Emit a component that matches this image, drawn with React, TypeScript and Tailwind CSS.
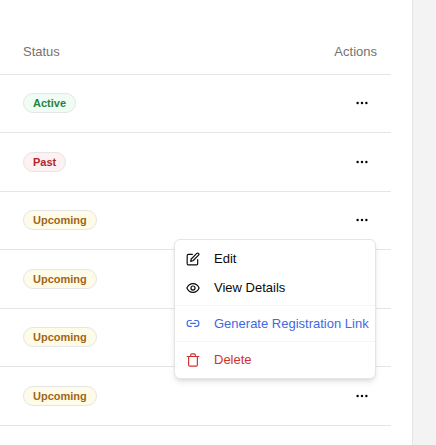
import type { ReactNode } from "react";

type Status = "Active" | "Past" | "Upcoming";

const rows: Status[] = ["Active", "Past", "Upcoming", "Upcoming", "Upcoming", "Upcoming"];
const openRow = 2;

const badgeColors: Record<Status, string> = {
  Active: "bg-green-50 text-[#28833f]",
  Past: "bg-[#fdf1f1] text-[#b4232a]",
  Upcoming: "bg-[#fefce8] text-[#a16519]",
};

function Icon({ children }: { children: ReactNode }) {
  return (
    <svg
      className="size-[14px] shrink-0"
      viewBox="0 0 24 24"
      fill="none"
      stroke="currentColor"
      strokeWidth="2"
      strokeLinecap="round"
      strokeLinejoin="round"
      aria-hidden="true"
    >
      {children}
    </svg>
  );
}

function MenuItem({ icon, label, color }: { icon: ReactNode; label: string; color: string }) {
  return (
    <button
      type="button"
      role="menuitem"
      className={`flex h-[29px] w-full items-center gap-[14px] rounded-sm px-2 text-left whitespace-nowrap ${color}`}
    >
      <Icon>{icon}</Icon>
      {label}
    </button>
  );
}

function Separator() {
  return <div role="separator" className="-mx-[3px] my-[3px] h-px bg-neutral-100" />;
}

function ActionsMenu() {
  return (
    <div
      role="menu"
      className="absolute top-full right-0 z-10 mt-[5px] w-[202px] rounded-md border border-neutral-200 bg-white px-[3px] py-1 shadow-md"
    >
      <MenuItem
        label="Edit"
        color="text-neutral-950"
        icon={
          <>
            <path d="M11 4H4a2 2 0 0 0-2 2v14a2 2 0 0 0 2 2h14a2 2 0 0 0 2-2v-7" />
            <path d="M18.5 2.5a2.1 2.1 0 0 1 3 3L12 15l-4 1 1-4z" />
          </>
        }
      />
      <MenuItem
        label="View Details"
        color="text-neutral-950"
        icon={
          <>
            <path d="M1.5 12c2-4.6 5.9-7.5 10.5-7.5s8.5 2.9 10.5 7.5c-2 4.6-5.9 7.5-10.5 7.5s-8.5-2.9-10.5-7.5z" />
            <circle cx="12" cy="12" r="3.5" />
          </>
        }
      />
      <Separator />
      <MenuItem
        label="Generate Registration Link"
        color="text-[#4169e1]"
        icon={
          <>
            <path d="M9 6H6a4 4 0 0 0-4 4v2a4 4 0 0 0 4 4h3" />
            <path d="M15 6h3a4 4 0 0 1 4 4v2a4 4 0 0 1-4 4h-3" />
            <path d="M8 11h8" />
          </>
        }
      />
      <Separator />
      <MenuItem
        label="Delete"
        color="text-[#d0312d]"
        icon={
          <>
            <path d="M2 6h20" />
            <path d="M4.5 6v14.5a2 2 0 0 0 2 2h11a2 2 0 0 0 2-2V6" />
            <path d="M8 6V3.5a2 2 0 0 1 2-2h4a2 2 0 0 1 2 2V6" />
          </>
        }
      />
    </div>
  );
}

export default function App() {
  return (
    <div className="min-h-screen bg-[#f3f3f3] pr-[23px] font-['Liberation_Sans',Arial,sans-serif] text-[13px] leading-5">
      <main className="min-h-screen border-r border-neutral-200 bg-white pr-[21px]">
        <table className="w-full border-separate border-spacing-0">
          <thead>
            <tr className="h-[75px] text-[#78716c]">
              <th className="border-b border-neutral-200 pt-[29px] pl-[23px] text-left font-normal">Status</th>
              <th className="border-b border-neutral-200 pt-[29px] pr-[14px] text-right font-normal">Actions</th>
            </tr>
          </thead>
          <tbody>
            {rows.map((status, index) => (
              <tr key={index} className="h-[58px] even:h-[59px]">
                <td className="border-b border-neutral-200 pb-px pl-[23px]">
                  <span
                    className={`inline-flex h-5 items-center rounded-full border border-neutral-200 px-[9px] align-middle text-[11px] leading-4 font-bold ${badgeColors[status]}`}
                  >
                    {status}
                  </span>
                </td>
                <td className="border-b border-neutral-200 pr-[15px] pb-px">
                  <div className="relative flex justify-end">
                    <button
                      type="button"
                      aria-label="Open menu"
                      aria-haspopup="menu"
                      aria-expanded={index === openRow}
                      className="flex h-7 w-7 items-center justify-center text-neutral-950"
                    >
                      <Icon>
                        <g fill="currentColor" stroke="none">
                          <circle cx="12" cy="12" r="2.1" />
                          <circle cx="19.5" cy="12" r="2.1" />
                          <circle cx="4.5" cy="12" r="2.1" />
                        </g>
                      </Icon>
                    </button>
                    {index === openRow && <ActionsMenu />}
                  </div>
                </td>
              </tr>
            ))}
          </tbody>
        </table>
      </main>
    </div>
  );
}
